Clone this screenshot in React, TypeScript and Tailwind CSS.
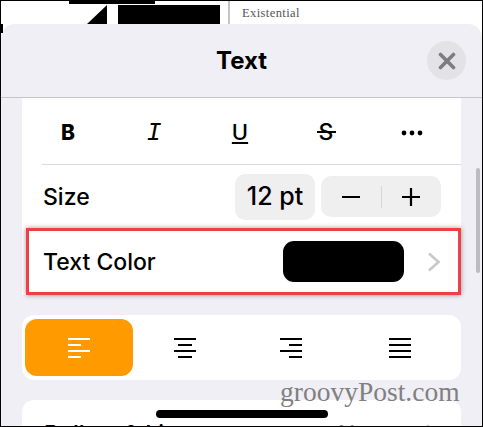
const sans = "font-['Inter','Liberation_Sans',sans-serif]";

function AlignIcon({ lines, color }: { lines: [number, number][]; color: string }) {
  return (
    <svg width="22" height="20" viewBox="0 0 22 20" fill="none" stroke={color} strokeWidth="2">
      {lines.map(([x1, x2], i) => (
        <line key={i} x1={x1} x2={x2} y1={1 + i * 6} y2={1 + i * 6} />
      ))}
    </svg>
  );
}

function Chevron({ className }: { className: string }) {
  return (
    <svg width="14" height="20" viewBox="0 0 14 20" fill="none" stroke="#c7c7cc" strokeWidth="2.6" className={className}>
      <path d="M2 1.5L11.5 10L2 18.5" />
    </svg>
  );
}

function PageBehind() {
  return (
    <div className="flex h-[23px] shrink-0 bg-white overflow-hidden">
      <svg width="226" height="23" viewBox="0 0 226 23" fill="#000" className="shrink-0">
        <path d="M68 0H154V3H68Z" />
        <path d="M106 4V23H86Z" />
        <path d="M117 4H219V23H117Z" />
      </svg>
      <div className="w-[2px] bg-[#c4c4c4] ml-[1px]" />
      <span className="ml-3 mt-[4px] text-[12.5px] leading-[16px] text-[#555] font-['Liberation_Serif',serif] tracking-[0.4px]">
        Existential
      </span>
    </div>
  );
}

function Header() {
  return (
    <div className="relative flex h-[74px] shrink-0 items-center justify-center border-b border-[#c6c6c8]">
      <span className="text-[24px] font-bold leading-[28px] text-black">Text</span>
      <button className="absolute right-[16px] top-[17px] flex h-[39px] w-[39px] items-center justify-center rounded-full bg-[#e3e3e7]">
        <svg width="18" height="18" viewBox="0 0 18 18" stroke="#7d7d80" strokeWidth="3.6" strokeLinecap="round">
          <line x1="2.5" y1="2.5" x2="15.5" y2="15.5" />
          <line x1="15.5" y1="2.5" x2="2.5" y2="15.5" />
        </svg>
      </button>
    </div>
  );
}

function StyleRow() {
  return (
    <div className="ml-[20px] flex h-[67px] items-center gap-[42px] border-b border-[#d9d9db] pl-[4px] pt-[3px] text-black">
      <span className="flex w-[44px] justify-center text-[21px] font-extrabold">B</span>
      <span className="mt-[3px] flex w-[44px] justify-center font-['Liberation_Mono',monospace] text-[25px] italic">I</span>
      <span className="flex w-[44px] justify-center text-[22px] font-medium underline underline-offset-[2px]">U</span>
      <span className="relative flex w-[44px] justify-center text-[23px] font-medium">
        S
        <span className="absolute left-[13px] top-[16px] h-[2px] w-[19px] bg-black" />
      </span>
      <span className="flex w-[44px] justify-center">
        <svg width="22" height="6" viewBox="0 0 22 6" fill="#000">
          <circle cx="3" cy="3" r="2.4" />
          <circle cx="11" cy="3" r="2.4" />
          <circle cx="19" cy="3" r="2.4" />
        </svg>
      </span>
    </div>
  );
}

function SizeRow() {
  return (
    <div className="ml-[21px] mr-[20px] flex h-[63px] items-center justify-between">
      <span className="mt-[2px] text-[23px] font-medium text-black">Size</span>
      <div className="flex items-center gap-[6px]">
        <div className="flex h-[46px] w-[80px] items-center justify-center rounded-[10px] bg-[#efeff0] text-[25px] font-medium text-black">
          12 pt
        </div>
        <div className="flex h-[41px] w-[120px] items-center rounded-[10px] bg-[#efeff0]">
          <div className="flex flex-1 justify-center">
            <svg width="18" height="18" viewBox="0 0 18 18" stroke="#000" strokeWidth="2.2">
              <line x1="0" y1="9" x2="18" y2="9" />
            </svg>
          </div>
          <div className="h-[22px] w-px bg-[#d6d6d8]" />
          <div className="flex flex-1 justify-center">
            <svg width="18" height="18" viewBox="0 0 18 18" stroke="#000" strokeWidth="2.2">
              <line x1="0" y1="9" x2="18" y2="9" />
              <line x1="9" y1="0" x2="9" y2="18" />
            </svg>
          </div>
        </div>
      </div>
    </div>
  );
}

function TextColorRow() {
  return (
    <div className="ml-[4px] flex h-[67px] items-center border-[3px] border-[#ef3e45] pl-[14px] shadow-[0_0_5px_rgba(0,0,0,0.4)]">
      <span className="mt-[1px] text-[23px] font-medium text-black">Text Color</span>
      <div className="ml-auto h-[41px] w-[121px] rounded-[11px] bg-black" />
      <Chevron className="ml-[23px] mr-[17px]" />
    </div>
  );
}

function AlignGroup() {
  return (
    <div className="mx-[21px] mt-[20px] flex h-[65px] shrink-0 items-center rounded-[12px] bg-white px-[3px]">
      <div className="flex h-[57px] w-[108px] items-center justify-center rounded-[12px] bg-[#ff9a00]">
        <AlignIcon color="#fff" lines={[[0, 22], [0, 13], [0, 22], [0, 13]]} />
      </div>
      <div className="flex flex-1 justify-center pr-[2px]">
        <AlignIcon color="#000" lines={[[0, 22], [4, 18], [0, 22], [4, 18]]} />
      </div>
      <div className="flex flex-1 justify-center pr-[4px]">
        <AlignIcon color="#000" lines={[[0, 22], [9, 22], [0, 22], [9, 22]]} />
      </div>
      <div className="flex flex-1 justify-center pr-[6px]">
        <AlignIcon color="#000" lines={[[0, 22], [0, 22], [0, 22], [0, 22]]} />
      </div>
    </div>
  );
}

export default function App() {
  return (
    <div className={`relative flex h-[427px] w-[483px] flex-col overflow-hidden border border-black bg-white ${sans}`}>
      <PageBehind />
      <div className="relative z-10 flex min-h-0 flex-1 flex-col overflow-hidden rounded-t-[14px] bg-[#f0eff5]">
        <Header />
        <div className="mx-[21px] shrink-0 bg-white">
          <StyleRow />
          <SizeRow />
          <TextColorRow />
        </div>
        <AlignGroup />
        <div className="mx-[21px] mt-[20px] flex h-[60px] shrink-0 items-start justify-between rounded-[12px] bg-white px-[22px] pt-[20px] text-[23px] font-medium leading-[28px] text-black">
          <span>Bullets &amp; Lists</span>
          <div className="flex items-start gap-[29px]">
            <span className="font-normal text-[#8e8e93]">None</span>
            <Chevron className="mt-[4px]" />
          </div>
        </div>
        <div className="absolute right-[2px] top-[144px] h-[105px] w-[4px] rounded-full bg-[#bcbcc0]" />
      </div>
      <span className="absolute left-[279px] top-[376px] z-20 text-[27.5px] leading-[30px] text-[#808080] font-['Liberation_Serif',serif]">
        groovyPost.com
      </span>
      <div className="absolute left-[155px] top-[409px] z-20 h-[8px] w-[172px] rounded-full bg-black" />
      <div className="absolute left-0 top-[23px] z-20 h-[9px] w-[2px] bg-black" />
    </div>
  );
}
